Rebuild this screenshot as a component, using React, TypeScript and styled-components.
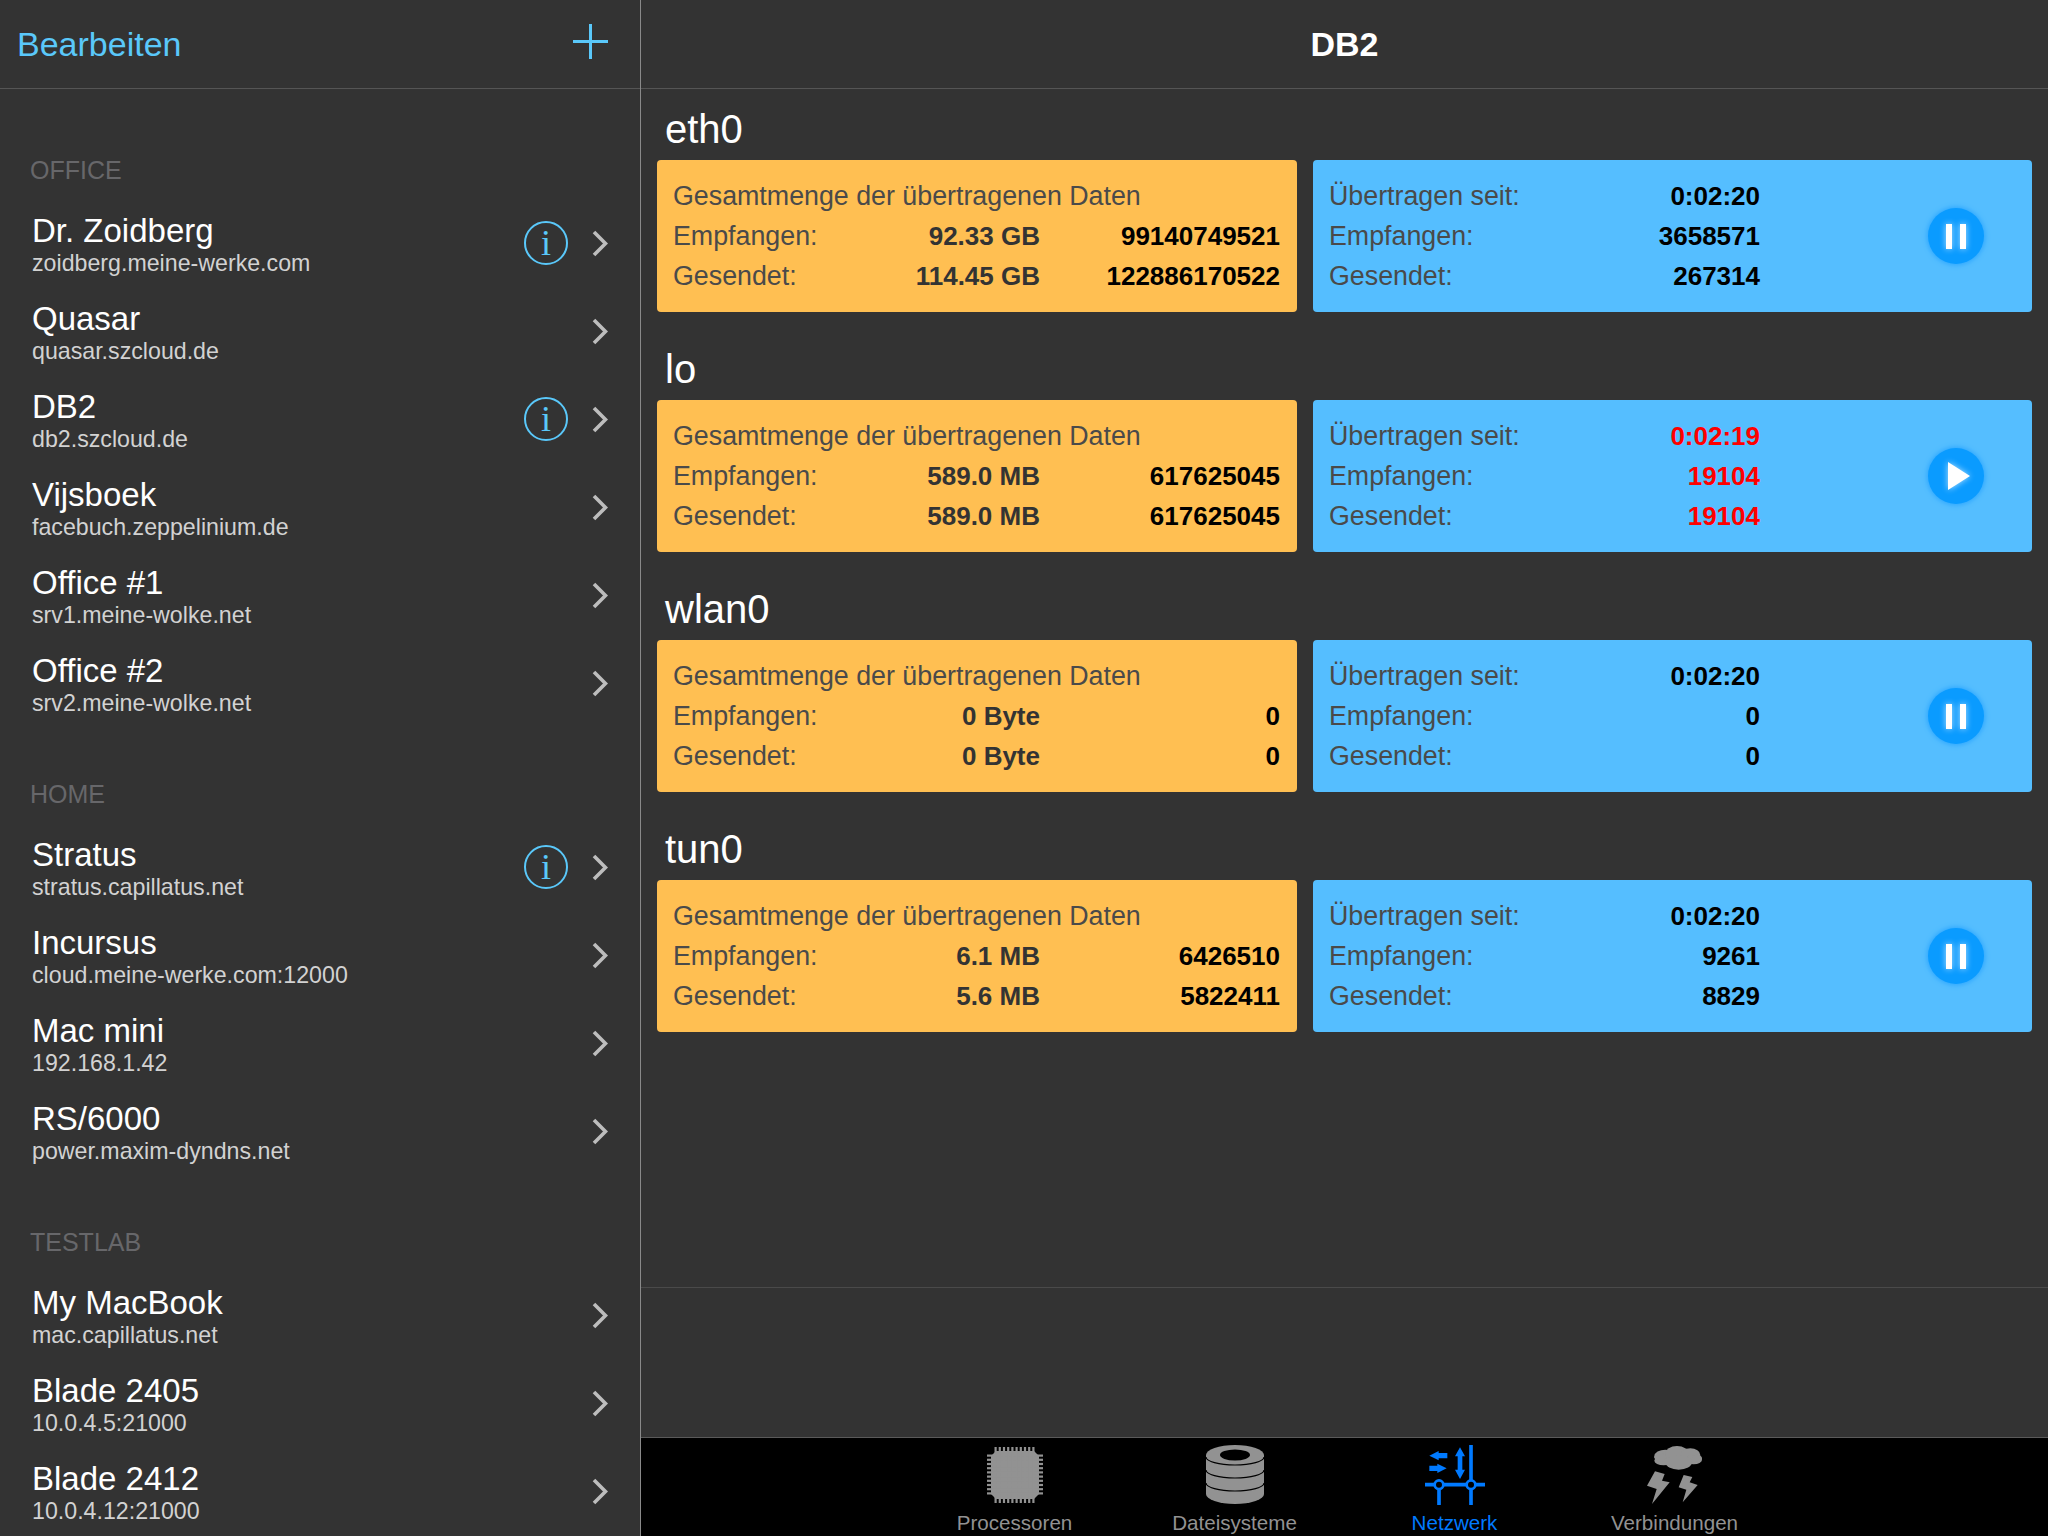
import styled, { createGlobalStyle } from "styled-components";

const GlobalStyle = createGlobalStyle`
  html, body {
    margin: 0;
    padding: 0;
    background: #333333;
  }
  * {
    box-sizing: border-box;
  }
`;

const Screen = styled.div`
  display: flex;
  width: 2048px;
  height: 1536px;
  overflow: hidden;
  background: #333333;
  font-family: "Liberation Sans", Arial, sans-serif;
`;

const Sidebar = styled.aside`
  width: 641px;
  flex: none;
  height: 100%;
  border-right: 1px solid #8a8a8a;
  overflow: hidden;
`;

const NavBar = styled.header`
  height: 89px;
  flex: none;
  border-bottom: 1px solid #555555;
  display: flex;
  align-items: center;
`;

const SideNav = styled(NavBar)`
  justify-content: space-between;
  padding: 0 32px 0 17px;
`;

const EditLink = styled.span`
  color: #5ac8fa;
  font-size: 34px;
  line-height: 88px;
`;

const PlusWrap = styled.span`
  display: flex;
  margin-bottom: 6px;
`;

const SectionTitle = styled.div<{ $first?: boolean }>`
  height: ${(p) => (p.$first ? 110 : 96)}px;
  padding-bottom: 14px;
  padding-left: 30px;
  display: flex;
  align-items: flex-end;
  color: #67676a;
  font-size: 25px;
  line-height: 30px;
`;

const Row = styled.div`
  height: 88px;
  display: flex;
  align-items: center;
  padding: 0 32px 0 32px;
`;

const RowText = styled.div`
  flex: 1;
  min-width: 0;
  padding-top: 3px;
`;

const RowTitle = styled.div`
  color: #ffffff;
  font-size: 33px;
  line-height: 38px;
`;

const RowSub = styled.div`
  color: #d2d2d2;
  font-size: 23.2px;
  line-height: 27px;
`;

const InfoBadge = styled.span`
  width: 44px;
  height: 44px;
  margin-right: 24px;
  border: 2px solid #5ac8fa;
  border-radius: 50%;
  display: flex;
  align-items: center;
  justify-content: center;
  color: #5ac8fa;
  font-family: "Liberation Serif", "Times New Roman", serif;
  font-size: 36px;
  line-height: 1;
`;

const Main = styled.main`
  flex: 1;
  min-width: 0;
  display: flex;
  flex-direction: column;
`;

const MainNav = styled(NavBar)`
  justify-content: center;
  color: #ffffff;
  font-size: 34px;
  font-weight: 700;
`;

const Content = styled.div`
  flex: 1;
  padding: 0 16px;
`;

const Group = styled.section`
  margin-bottom: 17px;
`;

const GroupTitle = styled.h2`
  height: 71px;
  margin: 0;
  padding: 0 0 8px 8px;
  display: flex;
  align-items: flex-end;
  color: #ffffff;
  font-size: 40px;
  font-weight: 400;
  line-height: 46px;
`;

const Cards = styled.div`
  display: flex;
  gap: 16px;
`;

const Card = styled.div`
  height: 152px;
  border-radius: 4px;
  display: flex;
  align-items: center;
`;

const TotalCard = styled(Card)`
  width: 640px;
  flex: none;
  padding: 0 17px 0 16px;
  background: #ffbf52;
`;

const RateCard = styled(Card)`
  flex: 1;
  padding: 0 48px 0 16px;
  background: #55beff;
  justify-content: space-between;
`;

const TotalGrid = styled.div`
  width: 100%;
  display: grid;
  grid-template-columns: 200px 167px 240px;
  grid-auto-rows: 40px;
  align-items: center;
`;

const RateGrid = styled.div`
  width: 431px;
  display: grid;
  grid-template-columns: 260px 171px;
  grid-auto-rows: 40px;
  align-items: center;
`;

const Label = styled.span<{ $wide?: boolean }>`
  color: #4a4a4a;
  font-size: 26.8px;
  ${(p) => p.$wide && "grid-column: 1 / -1;"}
`;

const Value = styled.span<{ $tone: "soft" | "strong" | "alert" }>`
  text-align: right;
  font-size: 26px;
  font-weight: 700;
  color: ${(p) => (p.$tone === "soft" ? "#333333" : p.$tone === "alert" ? "#ff0000" : "#000000")};
`;

const RoundButton = styled.div`
  width: 56px;
  height: 56px;
  flex: none;
  border-radius: 50%;
  background: #0a9bff;
  box-shadow: 0 0 5px 1px #2aa6ff;
  display: flex;
  align-items: center;
  justify-content: center;
`;

const PauseMark = styled.div`
  width: 20px;
  height: 25px;
  border-left: 6px solid #ffffff;
  border-right: 6px solid #ffffff;
  filter: drop-shadow(0 0 3px rgba(255, 255, 255, 0.7));
`;

const PlayMark = styled.div`
  width: 0;
  height: 0;
  margin-left: 6px;
  border-left: 22px solid #ffffff;
  border-top: 14px solid transparent;
  border-bottom: 14px solid transparent;
  filter: drop-shadow(0 0 3px rgba(255, 255, 255, 0.7));
`;

const Spacer = styled.div`
  height: 150px;
  flex: none;
  border-top: 1px solid #4a4a4a;
`;

const TabBar = styled.nav`
  height: 99px;
  flex: none;
  background: #000000;
  border-top: 1px solid #5a5a5a;
  display: flex;
  justify-content: center;
  overflow: hidden;
`;

const Tab = styled.div<{ $active?: boolean }>`
  width: 220px;
  display: flex;
  flex-direction: column;
  align-items: center;
  color: ${(p) => (p.$active ? "#007aff" : "#929292")};
`;

const TabIcon = styled.div`
  height: 73px;
  display: flex;
  align-items: center;
  justify-content: center;
`;

const TabLabel = styled.span`
  font-size: 20.6px;
  line-height: 24px;
`;

const Plus = () => (
  <svg width="35" height="35" viewBox="0 0 35 35">
    <path d="M17.5 0V35M0 17.5H35" stroke="#5ac8fa" strokeWidth="3" />
  </svg>
);

const Chevron = () => (
  <svg width="16" height="27" viewBox="0 0 16 27" fill="none">
    <path d="M2 2L13.5 13.5L2 25" stroke="#bdbdbd" strokeWidth="3.6" />
  </svg>
);

const ChipIcon = () => {
  const pins = Array.from({ length: 10 }, (_, i) => 8.5 + i * 4.2);
  return (
    <svg width="56" height="56" viewBox="0 0 56 56" fill="#929292">
      <path d="M9 4H47L52 9V47L47 52H9L4 47V9Z" />
      {pins.map((p) => (
        <g key={p}>
          <rect x={p - 1} y="0" width="2.2" height="56" />
          <rect x="0" y={p - 1} width="56" height="2.2" />
        </g>
      ))}
    </svg>
  );
};

const DiskIcon = () => (
  <svg width="58" height="59" viewBox="0 0 58 59">
    <path d="M0 10A29 10 0 0 1 58 10V49A29 10 0 0 1 0 49Z" fill="#929292" />
    <ellipse cx="29" cy="10" rx="15" ry="5.5" fill="#000000" />
    <g fill="none" stroke="#000000" strokeWidth="1.2">
      <path d="M0 12A29 8 0 0 0 58 12" />
      <path d="M0 25A29 8 0 0 0 58 25" />
      <path d="M0 38A29 8 0 0 0 58 38" />
    </g>
  </svg>
);

const NetworkIcon = () => (
  <svg width="60" height="60" viewBox="375 78 180 180">
    <g fill="#007aff">
      <path d="M388 110L416 96V102H442V118H416V124Z" />
      <path d="M440 148L412 134V140H388V156H412V162Z" />
      <path d="M480 85L495 112H487V152H495L480 180L465 152H473V112H465Z" />
    </g>
    <g fill="none" stroke="#007aff" strokeWidth="11">
      <path d="M375 197H555" />
      <path d="M513 78V258" />
      <path d="M417 197V258" />
    </g>
    <circle cx="417" cy="197" r="13" fill="#000000" stroke="#007aff" strokeWidth="8" />
    <circle cx="513" cy="197" r="13" fill="#000000" stroke="#007aff" strokeWidth="8" />
  </svg>
);

const StormIcon = () => (
  <svg width="55" height="58" viewBox="1040 81 165 174" fill="#929292">
    <ellipse cx="1095" cy="112" rx="33" ry="20" />
    <ellipse cx="1130" cy="105" rx="35" ry="24" />
    <ellipse cx="1170" cy="108" rx="30" ry="20" />
    <ellipse cx="1180" cy="122" rx="25" ry="14" />
    <ellipse cx="1090" cy="125" rx="28" ry="14" />
    <ellipse cx="1135" cy="130" rx="40" ry="22" />
    <ellipse cx="1080" cy="115" rx="18" ry="12" />
    <ellipse cx="1190" cy="118" rx="15" ry="11" />
    <path d="M1064 157L1093 165L1085 185L1108 190L1055 255L1069 210L1040 200Z" />
    <path d="M1150 168L1176 174L1168 190L1192 198L1147 250L1158 212L1135 205Z" />
  </svg>
);

type Host = { name: string; host: string; info?: boolean };

const sections: { title: string; hosts: Host[] }[] = [
  {
    title: "OFFICE",
    hosts: [
      { name: "Dr. Zoidberg", host: "zoidberg.meine-werke.com", info: true },
      { name: "Quasar", host: "quasar.szcloud.de" },
      { name: "DB2", host: "db2.szcloud.de", info: true },
      { name: "Vijsboek", host: "facebuch.zeppelinium.de" },
      { name: "Office #1", host: "srv1.meine-wolke.net" },
      { name: "Office #2", host: "srv2.meine-wolke.net" },
    ],
  },
  {
    title: "HOME",
    hosts: [
      { name: "Stratus", host: "stratus.capillatus.net", info: true },
      { name: "Incursus", host: "cloud.meine-werke.com:12000" },
      { name: "Mac mini", host: "192.168.1.42" },
      { name: "RS/6000", host: "power.maxim-dyndns.net" },
    ],
  },
  {
    title: "TESTLAB",
    hosts: [
      { name: "My MacBook", host: "mac.capillatus.net" },
      { name: "Blade 2405", host: "10.0.4.5:21000" },
      { name: "Blade 2412", host: "10.0.4.12:21000" },
    ],
  },
];

const interfaces = [
  {
    name: "eth0",
    rx: ["92.33 GB", "99140749521"],
    tx: ["114.45 GB", "122886170522"],
    since: "0:02:20",
    rate: ["3658571", "267314"],
  },
  {
    name: "lo",
    rx: ["589.0 MB", "617625045"],
    tx: ["589.0 MB", "617625045"],
    since: "0:02:19",
    rate: ["19104", "19104"],
    paused: true,
  },
  {
    name: "wlan0",
    rx: ["0 Byte", "0"],
    tx: ["0 Byte", "0"],
    since: "0:02:20",
    rate: ["0", "0"],
  },
  {
    name: "tun0",
    rx: ["6.1 MB", "6426510"],
    tx: ["5.6 MB", "5822411"],
    since: "0:02:20",
    rate: ["9261", "8829"],
  },
];

const App = () => {
  return (
    <Screen>
      <GlobalStyle />
      <Sidebar>
        <SideNav>
          <EditLink>Bearbeiten</EditLink>
          <PlusWrap><Plus /></PlusWrap>
        </SideNav>
        {sections.map((section, i) => (
          <div key={section.title}>
            <SectionTitle $first={i === 0}>{section.title}</SectionTitle>
            {section.hosts.map((h) => (
              <Row key={h.name}>
                <RowText>
                  <RowTitle>{h.name}</RowTitle>
                  <RowSub>{h.host}</RowSub>
                </RowText>
                {h.info && <InfoBadge>i</InfoBadge>}
                <Chevron />
              </Row>
            ))}
          </div>
        ))}
      </Sidebar>
      <Main>
        <MainNav>DB2</MainNav>
        <Content>
          {interfaces.map((n) => {
            const tone = n.paused ? "alert" : "strong";
            return (
              <Group key={n.name}>
                <GroupTitle>{n.name}</GroupTitle>
                <Cards>
                  <TotalCard>
                    <TotalGrid>
                      <Label $wide>Gesamtmenge der übertragenen Daten</Label>
                      <Label>Empfangen:</Label>
                      <Value $tone="soft">{n.rx[0]}</Value>
                      <Value $tone="strong">{n.rx[1]}</Value>
                      <Label>Gesendet:</Label>
                      <Value $tone="soft">{n.tx[0]}</Value>
                      <Value $tone="strong">{n.tx[1]}</Value>
                    </TotalGrid>
                  </TotalCard>
                  <RateCard>
                    <RateGrid>
                      <Label>Übertragen seit:</Label>
                      <Value $tone={tone}>{n.since}</Value>
                      <Label>Empfangen:</Label>
                      <Value $tone={tone}>{n.rate[0]}</Value>
                      <Label>Gesendet:</Label>
                      <Value $tone={tone}>{n.rate[1]}</Value>
                    </RateGrid>
                    <RoundButton>{n.paused ? <PlayMark /> : <PauseMark />}</RoundButton>
                  </RateCard>
                </Cards>
              </Group>
            );
          })}
        </Content>
        <Spacer />
        <TabBar>
          <Tab>
            <TabIcon><ChipIcon /></TabIcon>
            <TabLabel>Processoren</TabLabel>
          </Tab>
          <Tab>
            <TabIcon><DiskIcon /></TabIcon>
            <TabLabel>Dateisysteme</TabLabel>
          </Tab>
          <Tab $active>
            <TabIcon><NetworkIcon /></TabIcon>
            <TabLabel>Netzwerk</TabLabel>
          </Tab>
          <Tab>
            <TabIcon><StormIcon /></TabIcon>
            <TabLabel>Verbindungen</TabLabel>
          </Tab>
        </TabBar>
      </Main>
    </Screen>
  );
};

export default App;
